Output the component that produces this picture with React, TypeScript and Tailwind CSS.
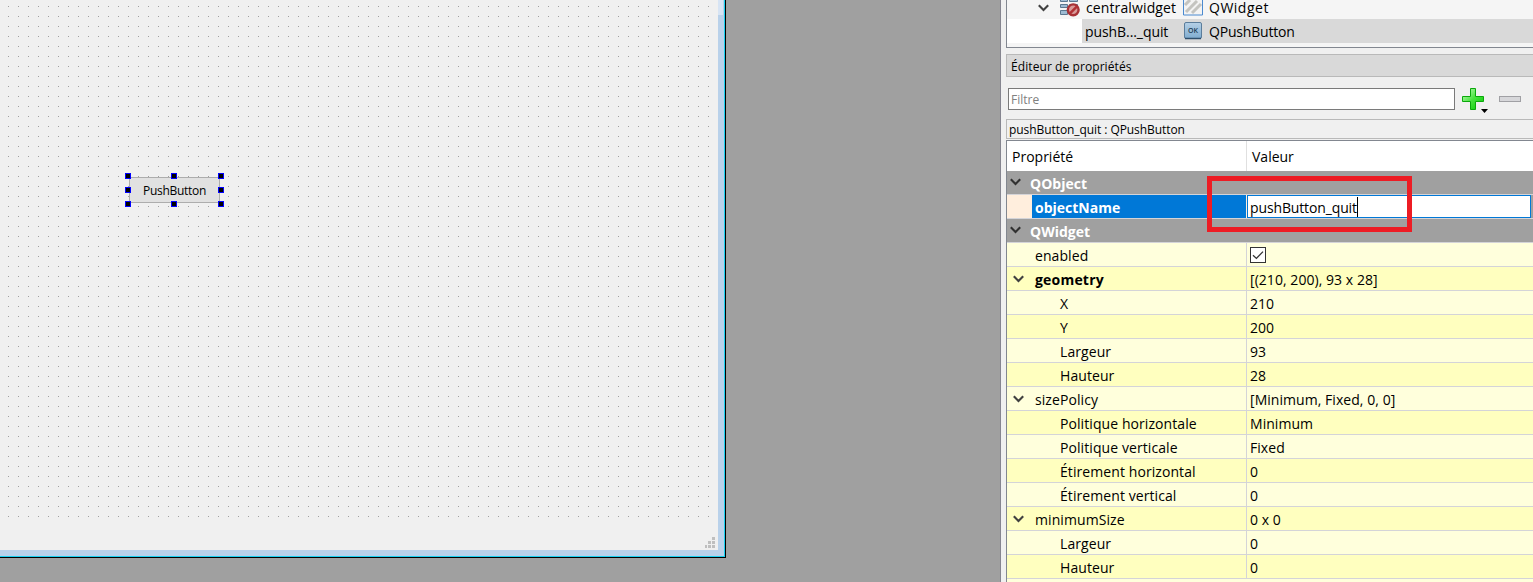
import React from "react";

type Row = { name: string; value?: string; kind?: "group" | "edit" | "check"; level: 1 | 2; open?: boolean; bold?: boolean; light?: boolean };

const rows: Row[] = [
  { name: "QObject", kind: "group", level: 1, open: true },
  { name: "objectName", value: "pushButton_quit", kind: "edit", level: 1 },
  { name: "QWidget", kind: "group", level: 1, open: true },
  { name: "enabled", kind: "check", level: 1, light: true },
  { name: "geometry", value: "[(210, 200), 93 x 28]", level: 1, open: true, bold: true },
  { name: "X", value: "210", level: 2, light: true },
  { name: "Y", value: "200", level: 2 },
  { name: "Largeur", value: "93", level: 2, light: true },
  { name: "Hauteur", value: "28", level: 2 },
  { name: "sizePolicy", value: "[Minimum, Fixed, 0, 0]", level: 1, open: true, light: true },
  { name: "Politique horizontale", value: "Minimum", level: 2 },
  { name: "Politique verticale", value: "Fixed", level: 2, light: true },
  { name: "Étirement horizontal", value: "0", level: 2 },
  { name: "Étirement vertical", value: "0", level: 2, light: true },
  { name: "minimumSize", value: "0 x 0", level: 1, open: true },
  { name: "Largeur", value: "0", level: 2, light: true },
  { name: "Hauteur", value: "0", level: 2 },
];

function Chevron({ className = "" }: { className?: string }) {
  return (
    <svg className={"h-[8px] w-[12px] shrink-0 " + className} viewBox="0 0 12 8">
      <path d="M.8 1.2 L5.500 5.900 L10.200 1.200" fill="none" stroke="currentColor" strokeWidth="2.100" />
    </svg>
  );
}

function PropertyRow({ row }: { row: Row }) {
  if (row.kind === "group") {
    return (
      <div className="flex h-6 items-center border-b border-[#d4d4d8] bg-[#a0a0a0] pl-[3px] font-bold text-white">
        <Chevron className="mr-[8px] -translate-y-px text-[#303030]" />
        <span className="translate-y-px">{row.name}</span>
      </div>
    );
  }
  if (row.kind === "edit") {
    return (
      <div className="flex h-6 border-b border-[#d4d4d8] bg-[#ffeedd]">
        <div className="ml-[25px] flex w-[214px] items-center bg-[#0078d7] pl-[3px] font-bold text-white"><span className="translate-y-px">{row.name}</span></div>
        <div className="ml-px flex w-[284px] items-center border border-[#0078d7] bg-white pl-[2px] tracking-[-0.13px]">
          <span className="translate-y-px">{row.value}</span>
          <span className="h-[20px] w-px bg-black" />
        </div>
        <div className="flex-1 bg-[#a0a0a0]" />
      </div>
    );
  }
  return (
    <div className={"flex h-6 border-b border-[#d4d4d8] " + (row.light ? "bg-[#ffffdc]" : "bg-[#ffffbf]")}>
      <div className="flex w-[240px] items-center border-r border-[#d4d4d8] pl-[6px]">
        <span className={row.level === 2 ? "w-[47px]" : "flex w-[22px]"}>
          {row.open && <Chevron className="text-[#404040]" />}
        </span>
        <span className={row.bold ? "translate-y-px font-bold tracking-[0.2px]" : "translate-y-px tracking-[0.08px]"}>{row.name}</span>
      </div>
      <div className="flex items-center pl-[3px] tracking-[0.05px]">
        {row.kind === "check" ? (
          <svg className="h-4 w-4" viewBox="0 0 16 16">
            <rect x=".5" y=".5" width="15" height="15" fill="#fff" stroke="#333" />
            <path d="M3 8.2 L6.4 11.4 L13 4.6" fill="none" stroke="#333" strokeWidth="1.3" />
          </svg>
        ) : (
          <span className="translate-y-px">{row.value}</span>
        )}
      </div>
    </div>
  );
}

const handles = [
  "left-[-4px] top-[-5px]", "left-[42px] top-[-5px]", "left-[89px] top-[-5px]",
  "left-[-4px] top-[9px]", "left-[89px] top-[9px]",
  "left-[-4px] top-[23px]", "left-[42px] top-[23px]", "left-[89px] top-[23px]",
];

function FormWindow() {
  return (
    <div className="flex h-[558px] w-[726px] border-r border-b border-black">
      <div className="flex flex-1 border-r border-b border-[#18d0f0]">
        <div className="relative flex-1 border-r-[6px] border-b-[6px] border-[#b9d1ea] bg-[#f0f0f0]">
          <div className="absolute top-0 -right-[5px] h-[15px] w-[5px] bg-[#d7e4f4]" />
          <svg className="block h-[550px] w-[718px]">
            <defs>
              <pattern id="grid" width="10" height="10" patternUnits="userSpaceOnUse">
                <rect x="8" y="6" width="1" height="1" fill="#a0a0a0" />
              </pattern>
            </defs>
            <rect width="710" height="520" fill="url(#grid)" />
            <g fill="#bfbfbf">
              <path d="M712 537h3v3h-3z M708 541h3v3h-3z M712 541h3v3h-3z M705 545h2v3h-2z M708 545h3v3h-3z M712 545h3v3h-3z" />
            </g>
          </svg>
          <div className="absolute top-[177px] left-[129px] flex h-[26px] w-[91px] items-center justify-center border border-[#adadad] bg-[#e1e1e1] text-[12px] tracking-[-0.3px] text-black">
            <span className="translate-y-px">PushButton</span>
            {handles.map((h) => (
              <span key={h} className={"absolute ml-[-1px] h-[6px] w-[6px] border border-[#0000ff] bg-black " + h} />
            ))}
          </div>
        </div>
      </div>
    </div>
  );
}

function LayoutIcon() {
  return (
    <svg className="block h-[19px] w-[21px]" viewBox="0 0 21 19">
      <g fill="#9dbbd2" stroke="#5c7890">
        <path d="M1.5 -2.500h7v4h-7z M10.500 -2.500h8v4h-8z M1.500 4.500h7v3h-7z M10.500 4.500h8v3h-8z M1.500 10.500h7v4h-7z" />
      </g>
      <circle cx="14.200" cy="9.800" r="5.400" fill="#d89a98" stroke="#a83236" strokeWidth="2.400" />
      <path d="M11 13.300 L18 6.300" stroke="#b03034" strokeWidth="2.400" />
    </svg>
  );
}

function Tree() {
  return (
    <div className="h-[48px] shrink-0 border-b border-l border-[#828790] bg-[#f5f5f5]">
      <div className="flex h-[19px] items-center">
        <Chevron className="ml-[31px] -translate-y-[2px] text-[#404040]" />
        <div className="ml-[9px] w-[27px]"><LayoutIcon /></div>
        <span className="w-[97px] -translate-y-[2px] tracking-[0.12px]">centralwidget</span>
        <svg className="h-[19px] w-[20px]" viewBox="0 0 20 19">
          <path d="M.5 -3v18h19v-18" fill="#f3f3f3" stroke="#4b8ad0" />
          <path d="M3 12L14 1M9 13L18 4M2 5L7 0" stroke="#c4c4c0" strokeWidth="3" />
        </svg>
        <span className="ml-[6px] -translate-y-[2px] tracking-[0.5px]">QWidget</span>
      </div>
      <div className="flex h-6 bg-white">
        <div className="ml-[75px] flex flex-1 items-center bg-[#d9d9d9] pl-[3px]">
          <span className="w-[98px] tracking-[-0.08px]">pushB..._quit</span>
          <svg className="h-[20px] w-[20px]" viewBox="0 0 20 20">
            <defs><linearGradient id="ok" x2="0" y2="1"><stop stopColor="#b5d0e6" /><stop offset="1" stopColor="#7facd0" /></linearGradient></defs>
            <rect x="1.500" y="1.500" width="17" height="16" rx="1.500" fill="url(#ok)" stroke="#5b7d9b" />
            <path d="M2 17.500h16" stroke="#2f4f6c" strokeWidth="1.500" />
            <text x="10" y="11.500" textAnchor="middle" fontSize="7" fontWeight="600" fill="#203c56">OK</text>
          </svg>
          <span className="ml-[6px] tracking-[-0.2px]">QPushButton</span>
        </div>
      </div>
    </div>
  );
}

export default function App() {
  return (
    <div className="flex h-[582px] w-[1533px] overflow-hidden bg-[#a0a0a0] font-['Open_Sans','Noto_Sans',sans-serif] text-black">
      <div className="w-[1000px]"><FormWindow /></div>
      <div className="flex flex-1 flex-col border-l border-[#85858f] bg-[#f0f0f0] pl-[5px] text-[14px] whitespace-nowrap">
        <Tree />
        <div className="mt-[6px] flex h-[23px] shrink-0 items-center border border-r-0 border-[#b9b9b9] bg-[#d9d9d9] pl-[4px] text-[12px] tracking-[0.08px]"><span className="translate-y-px">Éditeur de propriétés</span></div>
        <div className="mt-[11px] flex h-[31px] shrink-0 pl-[2px]">
          <div className="flex h-[22px] w-[447px] items-center border border-[#7a7a7a] bg-white pl-[2px] text-[12px] text-[#808080]"><span className="translate-y-px">Filtre</span></div>
          <svg className="ml-[7px] h-[26px] w-[26px]" viewBox="0 0 26 26">
            <defs><linearGradient id="plus" x2="1" y2="1"><stop stopColor="#cfffc8" /><stop offset=".5" stopColor="#48e33e" /><stop offset="1" stopColor="#00c800" /></linearGradient></defs>
            <path d="M8.500 .5h5v8h8v5h-8v8h-5v-8h-8v-5h8z" fill="url(#plus)" stroke="#0ba80b" />
            <path d="M19 21h7l-3.500 4z" />
          </svg>
          <svg className="mt-[8px] ml-[11px] h-[6px] w-[22px]" viewBox="0 0 22 6">
            <rect x=".5" y=".5" width="21" height="5" fill="#d7d7da" stroke="#a0a0a4" />
          </svg>
        </div>
        <div className="flex h-[20px] shrink-0 items-center border border-r-0 border-[#b9b9b9] pl-[2px] text-[12px] tracking-[-0.07px]"><span className="translate-y-px">pushButton_quit : QPushButton</span></div>
        <div className="relative mt-px flex-1 border-t border-l border-[#828790] bg-[#ffffdc]">
          <div className="flex h-[30px] items-center bg-white">
            <div className="flex h-full w-[240px] items-center border-r border-[#e0e0e0] pl-[5px]">Propriété</div>
            <div className="pl-[5px]">Valeur</div>
          </div>
          {rows.map((row, i) => <PropertyRow key={i} row={row} />)}
          <div className="absolute top-[35px] left-[200px] h-[56px] w-[205px] border-[5px] border-[#ed1c24]" />
        </div>
      </div>
    </div>
  );
}
